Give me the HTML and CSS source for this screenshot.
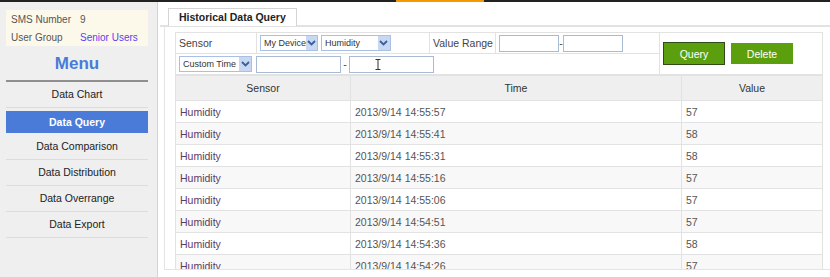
FILE: index.html
```html
<!DOCTYPE html>
<html lang="en">
<head>
    <meta charset="UTF-8">
    <title>Historical Data Query</title>
    <link rel="stylesheet" href="styles.css">
</head>
<body>
    <div class="topbar"><span class="topbar-mark"></span></div>

    <div class="page">
        <div class="sidebar">
            <table class="user-info">
                <tr><td>SMS Number</td><td>9</td></tr>
                <tr><td>User Group</td><td class="group">Senior Users</td></tr>
            </table>

            <div class="menu-title">Menu</div>

            <ul class="menu">
                <li>Data Chart</li>
                <li class="active">Data Query</li>
                <li>Data Comparison</li>
                <li>Data Distribution</li>
                <li>Data Overrange</li>
                <li>Data Export</li>
            </ul>
        </div>

        <div class="main">
            <div class="tabs">
                <div class="tab">Historical Data Query</div>
            </div>

            <div class="panel">
                <table class="query-form">
                    <tr>
                        <td class="label-cell">Sensor</td>
                        <td class="select-cell">
                            <span class="select dev">My Device<span class="arrow"><svg width="9" height="6" viewBox="0 0 9 6"><path d="M1 1 L4.5 4.5 L8 1" fill="none" stroke="#3b5e9e" stroke-width="1.8"/></svg></span></span>
                            <span class="select hum">Humidity<span class="arrow"><svg width="9" height="6" viewBox="0 0 9 6"><path d="M1 1 L4.5 4.5 L8 1" fill="none" stroke="#3b5e9e" stroke-width="1.8"/></svg></span></span>
                        </td>
                        <td class="range-label">Value Range</td>
                        <td class="range-cell">
                            <span class="field short"></span><span class="dash">-</span><span class="field short"></span>
                        </td>
                        <td class="button-cell" rowspan="2">
                            <div class="buttons">
                                <button class="btn btn-query">Query</button>
                                <button class="btn">Delete</button>
                            </div>
                        </td>
                    </tr>
                    <tr>
                        <td colspan="4" class="time-cell">
                            <span class="select time">Custom Time<span class="arrow"><svg width="9" height="6" viewBox="0 0 9 6"><path d="M1 1 L4.5 4.5 L8 1" fill="none" stroke="#3b5e9e" stroke-width="1.8"/></svg></span></span>
                            <span class="field long"></span><span class="dash wide">-</span><span class="field long cursor"><svg width="6" height="11" viewBox="0 0 6 11"><path d="M0.5 0.5 H5.5 M3 0.5 V10.5 M0.5 10.5 H5.5" fill="none" stroke="#333" stroke-width="1"/></svg></span>
                        </td>
                    </tr>
                </table>

                <table class="results">
                    <thead>
                        <tr><th class="col-sensor">Sensor</th><th class="col-time">Time</th><th>Value</th></tr>
                    </thead>
                    <tbody>
                        <tr><td class="sensor">Humidity</td><td>2013/9/14 14:55:57</td><td>57</td></tr>
                        <tr><td class="sensor">Humidity</td><td>2013/9/14 14:55:41</td><td>58</td></tr>
                        <tr><td class="sensor">Humidity</td><td>2013/9/14 14:55:31</td><td>58</td></tr>
                        <tr><td class="sensor">Humidity</td><td>2013/9/14 14:55:16</td><td>57</td></tr>
                        <tr><td class="sensor">Humidity</td><td>2013/9/14 14:55:06</td><td>57</td></tr>
                        <tr><td class="sensor">Humidity</td><td>2013/9/14 14:54:51</td><td>57</td></tr>
                        <tr><td class="sensor">Humidity</td><td>2013/9/14 14:54:36</td><td>58</td></tr>
                        <tr><td class="sensor">Humidity</td><td>2013/9/14 14:54:26</td><td>57</td></tr>
                    </tbody>
                </table>
            </div>
        </div>
    </div>
</body>
</html>
```

FILE: styles.css
```css
html, body {
    height: 100%;
}

body {
    margin: 0;
    font-family: "Liberation Sans", Arial, sans-serif;
    font-size: 10.5px;
    color: #333;
    background-color: #fff;
    overflow: hidden;
    white-space: nowrap;
}

.topbar {
    height: 2px;
    background-color: #222;
    display: flex;
}

.topbar-mark {
    width: 88px;
    margin-left: 396px;
    background-color: #f39800;
}

.page {
    display: flex;
    height: 275px;
}

/* sidebar */
.sidebar {
    width: 142px;
    padding: 8px 9px 0 6px;
    background-color: #efefef;
    border-right: 1px solid #d4d4d4;
}

.user-info {
    width: 100%;
    height: 36px;
    border-collapse: collapse;
    background-color: #fdf9ea;
    color: #555;
    font-size: 10px;
}

.user-info td {
    padding: 0 0 0 5px;
    height: 16px;
}

.user-info td:first-child {
    width: 64px;
}

.user-info .group {
    color: #5b3ff0;
}

.menu-title {
    margin-top: 8px;
    text-align: center;
    font-size: 17px;
    font-weight: bold;
    color: #4a7bd9;
    padding-bottom: 6px;
    border-bottom: 2px solid #8f8f8f;
}

.menu {
    list-style: none;
    margin: 0;
    padding: 0;
}

.menu li {
    height: 25px;
    line-height: 25px;
    text-align: center;
    font-size: 10.5px;
    color: #222;
    border-bottom: 1px solid #dcdcdc;
}

.menu li.active {
    height: 22px;
    line-height: 22px;
    margin: 3px 0 1px 0;
    border-bottom: none;
    background-color: #4a7bd9;
    color: #fff;
    font-weight: bold;
}

/* main area */
.main {
    flex: 1;
    margin-left: 2px;
}

.tabs {
    margin-top: 6px;
    padding-left: 8px;
    height: 17px;
    border-bottom: 2px solid #e2e2e2;
}

.tab {
    display: inline-block;
    height: 17px;
    line-height: 17px;
    padding: 0 10px;
    border: 1px solid #d4d4d4;
    border-bottom: none;
    background-color: #fff;
    font-size: 10.5px;
    font-weight: bold;
    color: #222;
}

.panel {
    margin-left: 4px;
    height: 237px;
    padding: 5px 7px 0 10px;
    border-left: 1px solid #e4e4e4;
    border-bottom: 1px solid #e4e4e4;
    overflow: hidden;
}

.query-form {
    width: 100%;
    border-collapse: collapse;
    color: #444;
    table-layout: fixed;
}

.query-form td {
    border: 1px solid #e2e2e2;
    padding: 0 3px;
    height: 20px;
    line-height: 14px;
}

.query-form .label-cell {
    width: 74px;
}

.query-form .select-cell {
    width: 166px;
}

.query-form .range-label {
    width: 59px;
}

.query-form .range-cell {
    width: 157px;
}

.query-form .button-cell {
    padding: 0 3px;
}

.query-form .time-cell {
    border-top: none;
}

.buttons {
    display: flex;
    align-items: center;
    gap: 6px;
}

.select {
    display: inline-flex;
    align-items: center;
    justify-content: space-between;
    box-sizing: border-box;
    height: 16px;
    padding-left: 3px;
    border: 1px solid #a9c0e4;
    background-color: #fff;
    color: #333;
    font-size: 9px;
    vertical-align: middle;
}

.select.dev { width: 58px; }
.select.hum { width: 70px; }
.select.time { width: 73px; margin-right: 1px; }

.arrow {
    display: flex;
    align-items: center;
    justify-content: center;
    width: 12px;
    height: 14px;
    background-color: #c8d8f0;
}

.field {
    display: inline-flex;
    align-items: center;
    justify-content: center;
    box-sizing: border-box;
    height: 17px;
    border: 1px solid #a9bbd4;
    background-color: #fff;
    vertical-align: middle;
}

.field.short { width: 60px; }
.field.long { width: 85px; }

.field.cursor {
    justify-content: flex-start;
    padding-left: 25px;
}

.dash {
    display: inline-block;
    width: 4px;
    text-align: center;
    vertical-align: middle;
}

.dash.wide {
    width: 8px;
}

.btn {
    box-sizing: border-box;
    width: 62px;
    height: 21px;
    padding: 0;
    border: 1px solid #5b9f0f;
    background-color: #5b9f0f;
    color: #fff;
    font-family: "Liberation Sans", Arial, sans-serif;
    font-size: 10.5px;
}

.btn-query {
    height: 23px;
    border: 1px solid #2f4b18;
}

/* results */
.results {
    width: 100%;
    border-collapse: collapse;
    color: #555;
    table-layout: fixed;
}

.results th {
    height: 24px;
    padding: 0;
    background-color: #efefef;
    font-weight: normal;
    color: #333;
    border: 1px solid #e2e2e2;
}

.results .col-sensor { width: 174px; }
.results .col-time { width: 330px; }

.results td {
    height: 21px;
    padding: 0 4px;
    border: 1px solid #e2e2e2;
}

.results tbody tr:nth-child(even) td {
    background-color: #f8f8f8;
}

.results td.sensor {
    color: #5a3c64;
}
```
